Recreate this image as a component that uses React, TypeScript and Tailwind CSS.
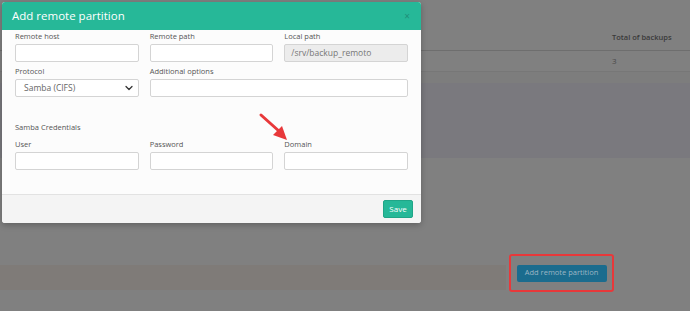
import { ChevronDown } from "lucide-react";

const font = { fontFamily: "'Open Sans', 'Liberation Sans', sans-serif" };

function Field({ label, value, disabled }: { label: string; value?: string; disabled?: boolean }) {
  return (
    <div className="flex flex-col">
      <label className="h-[12px] text-[7.5px] leading-[12px] text-[#555]">{label}</label>
      <div
        className={
          "mt-[2px] h-[18px] rounded-[2px] border border-[#d4d4d4] px-[6px] text-[8.5px] leading-[16px] text-[#777] " +
          (disabled ? "bg-[#ececec]" : "bg-white")
        }
      >
        {value}
      </div>
    </div>
  );
}

export default function App() {
  return (
    <div className="relative h-[311px] w-[690px] overflow-hidden bg-[#808080]" style={font}>
      {/* page behind the backdrop */}
      <div className="flex h-full flex-col">
        <div className="flex h-[51px] items-end border-b border-[#6e6e6e] pb-[7px] pl-[612px] text-[7.5px] font-semibold text-[#3a3a3a]">
          Total of backups
        </div>
        <div className="flex h-[21px] items-center border-b border-[#777] pl-[612px] text-[8px] text-[#4a4a4a]">
          3
        </div>
        <div className="h-[11px] bg-[#7d7d7d]" />
        <div className="h-[75px] bg-[#7a797e]" />
        <div className="h-[107px]" />
        <div className="flex h-[25px]">
          <div className="w-[506px] bg-[#7f7b78]" />
        </div>
      </div>

      {/* highlighted button */}
      <div className="absolute left-[509px] top-[254px] flex h-[38px] w-[105px] items-center justify-center rounded-[3px] border-2 border-[#e8383a]">
        <div className="flex h-[17px] w-[90px] items-center justify-center rounded-[2px] bg-[#1b6c8e] text-[7.5px] text-[#9cb6c4]">
          Add remote partition
        </div>
      </div>

      {/* modal */}
      <div className="absolute left-[2px] top-[2px] w-[419px] overflow-hidden rounded-[3px] bg-[#fcfcfc] shadow-[0_2px_6px_rgba(0,0,0,0.25)]">
        <div className="flex h-[28px] items-center justify-between bg-[#26b898] pl-[10px] pr-[11px]">
          <span className="text-[11.5px] text-white">Add remote partition</span>
          <span className="text-[10px] leading-none text-[#1f8f78]">×</span>
        </div>
        <div className="px-[13px]">
          <div className="grid grid-cols-3 gap-x-[11px]">
            <Field label="Remote host" />
            <Field label="Remote path" />
            <Field label="Local path" value="/srv/backup_remoto" disabled />
          </div>
          <div className="mt-[3px] grid grid-cols-3 gap-x-[11px]">
            <div className="flex flex-col">
              <label className="h-[12px] text-[7.5px] leading-[12px] text-[#555]">Protocol</label>
              <div className="mt-[2px] flex h-[18px] items-center justify-between rounded-[2px] border border-[#d4d4d4] bg-white pl-[8px] pr-[3px] text-[8.5px] text-[#666]">
                <span>Samba (CIFS)</span>
                <ChevronDown size={12} strokeWidth={2.5} className="text-[#333]" />
              </div>
            </div>
            <div className="col-span-2 flex flex-col">
              <label className="h-[12px] text-[7.5px] leading-[12px] text-[#555]">Additional options</label>
              <div className="mt-[2px] h-[18px] rounded-[2px] border border-[#d4d4d4] bg-white" />
            </div>
          </div>
          <div className="mt-[24px] h-[12px] text-[7.5px] leading-[12px] text-[#555]">Samba Credentials</div>
          <div className="mt-[5px] grid grid-cols-3 gap-x-[11px]">
            <Field label="User" />
            <Field label="Password" />
            <Field label="Domain" />
          </div>
          <div className="h-[24px]" />
        </div>
        <div className="flex h-[29px] items-center justify-end border-t border-[#e2e2e2] bg-[#f4f4f4] pr-[8px]">
          <button className="h-[18px] w-[30px] rounded-[2px] border border-[#20a587] bg-[#26b898] text-[8px] text-white">
            Save
          </button>
        </div>
      </div>

      {/* red arrow */}
      <svg className="absolute left-[256px] top-[110px]" width="36" height="34" viewBox="0 0 36 34">
        <line x1="5" y1="5" x2="24" y2="22" stroke="#e8383a" strokeWidth="3" strokeLinecap="round" />
        <polygon points="31,30 17,25 26,16" fill="#e8383a" />
      </svg>
    </div>
  );
}
